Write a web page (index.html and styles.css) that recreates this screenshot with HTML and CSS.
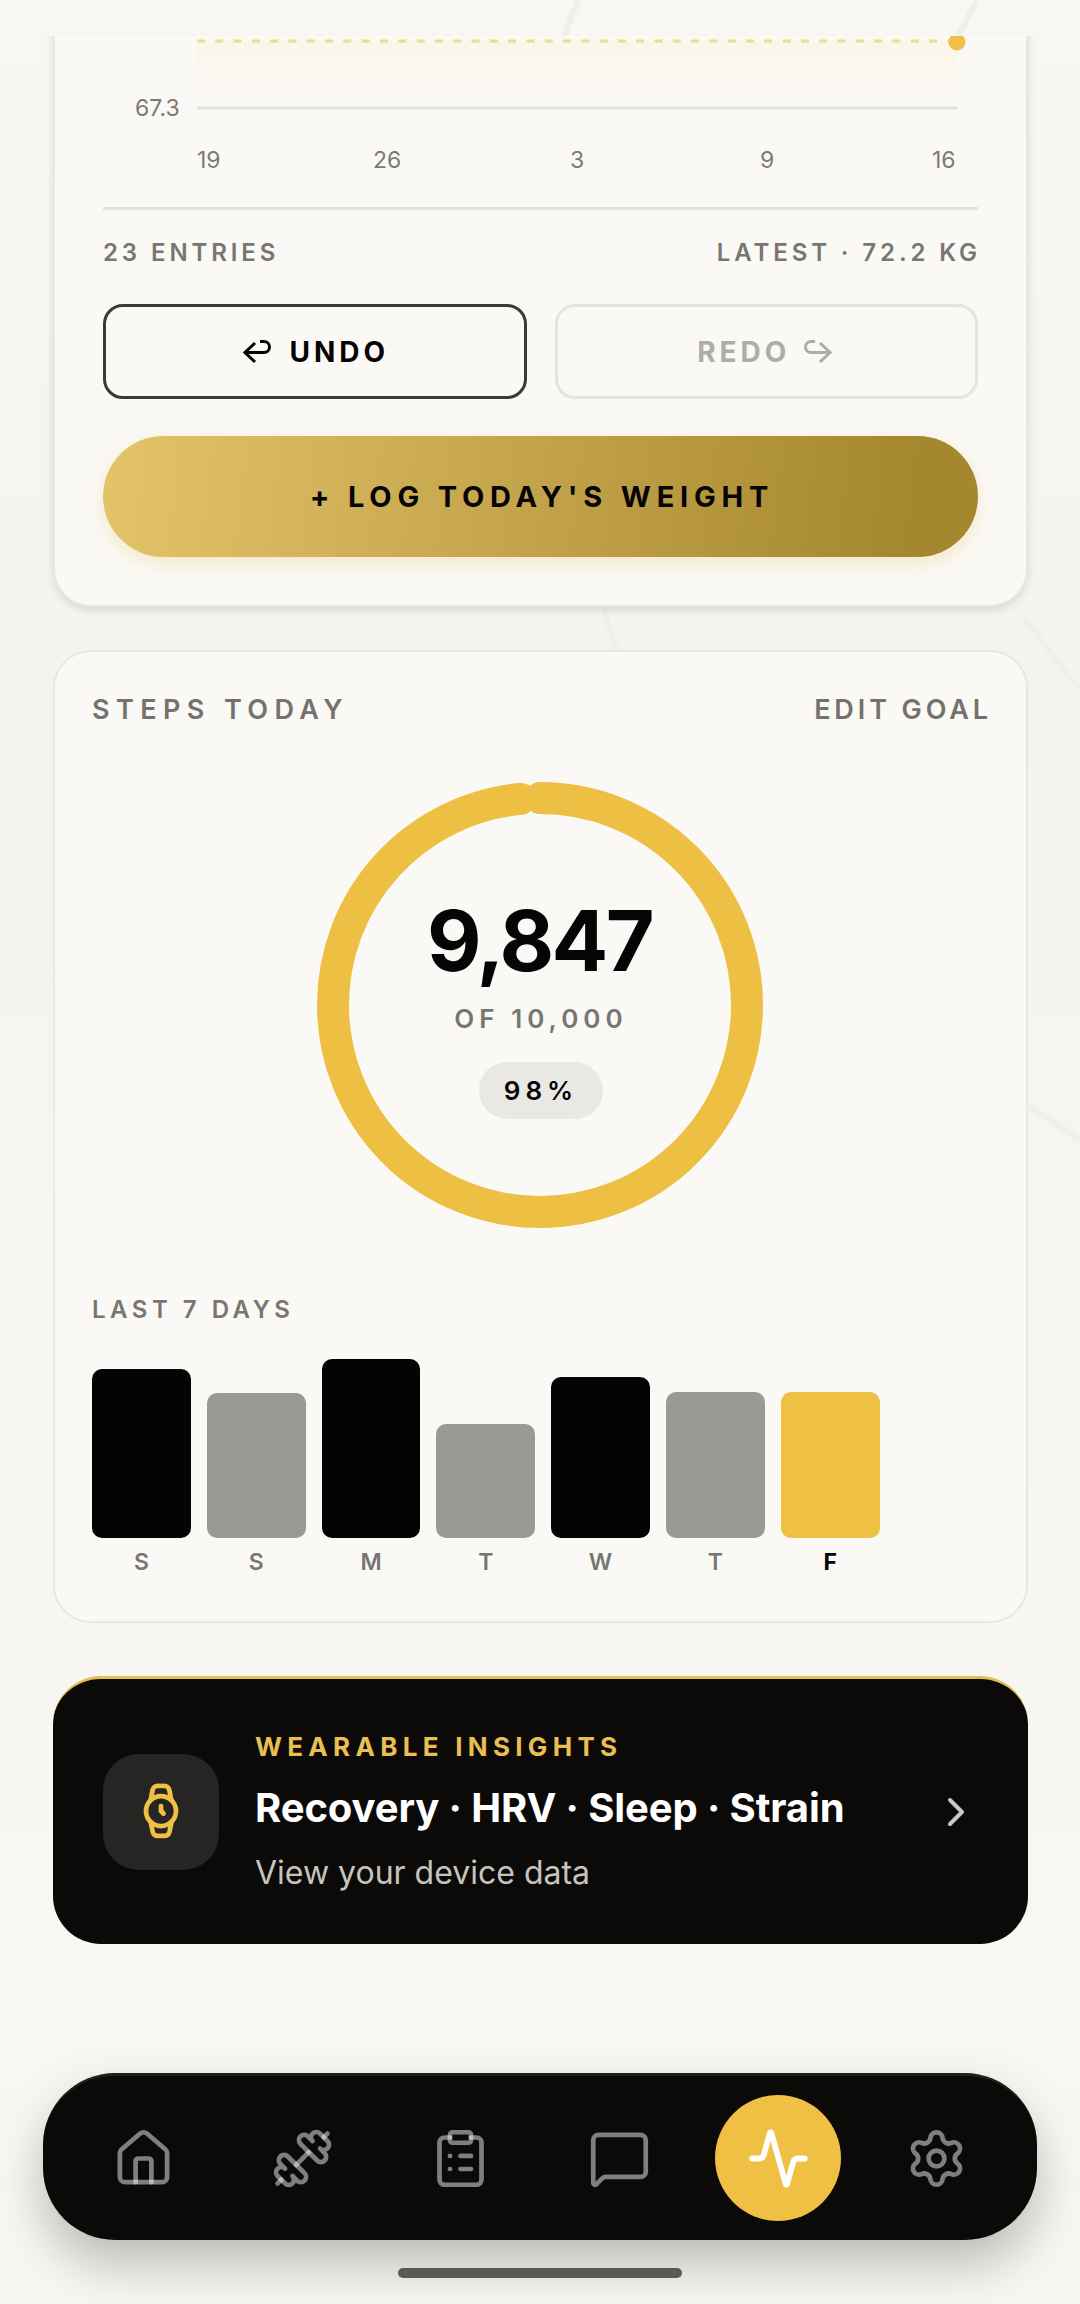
FILE: index.html
```html
<!DOCTYPE html>
<html lang="en">
<head>
<meta charset="utf-8">
<title>Progress</title>
<link rel="stylesheet" href="styles.css">
</head>
<body>
<div class="screen">
  <svg class="backdrop" viewBox="0 0 1080 2304" preserveAspectRatio="none" aria-hidden="true">
    <g fill="none" stroke="#f0efea" stroke-width="6">
      <path d="M578 0 Q570 20 565 36"/>
      <path d="M977 0 L958 36"/>
      <path d="M603 606 Q610 630 617 652"/>
      <path d="M1024 618 L1080 690"/>
      <path d="M1026 1105 Q1060 1125 1080 1140"/>
    </g>
  </svg>
  <main class="scroller">
    <section class="card weight-card">
      <div class="chart">
        <svg class="chart-svg" viewBox="0 0 1080 90" aria-hidden="true">
          <defs>
            <linearGradient id="area" x1="0" y1="0" x2="0" y2="1">
              <stop offset="0" stop-color="#f2c94c" stop-opacity=".07"/>
              <stop offset="1" stop-color="#f2c94c" stop-opacity="0"/>
            </linearGradient>
          </defs>
          <rect x="197" y="5" width="760" height="58" fill="url(#area)"/>
          <line x1="197" y1="5" x2="957" y2="5" stroke="#f1d98f" stroke-width="3" stroke-dasharray="8 10.300"/>
          <circle cx="957" cy="6" r="8.500" fill="#efc043"/>
          <line x1="197" y1="72" x2="957" y2="72" stroke="#e4e2dd" stroke-width="3"/>
        </svg>
        <span class="y-label">67.3</span>
        <span class="x-label x-19">19</span>
        <span class="x-label x-26">26</span>
        <span class="x-label x-3">3</span>
        <span class="x-label x-9">9</span>
        <span class="x-label x-16">16</span>
      </div>
      <div class="meta">
        <span>23 ENTRIES</span>
        <span class="meta-end">LATEST · 72.2 KG</span>
      </div>
      <div class="history">
        <button class="hist-btn hist-on">
          <svg class="hist-icon" viewBox="0 0 30 24" aria-hidden="true"><path d="M12 3 2 12.500 12 22"/><path d="M2 12.500h19a5.500 5.500 0 0 0 0-11h-4"/></svg>
          UNDO
        </button>
        <button class="hist-btn hist-off">
          REDO
          <svg class="hist-icon" viewBox="0 0 30 24" aria-hidden="true"><path d="m18 3 10 9.500L18 22"/><path d="M28 12.500H9a5.500 5.500 0 0 1 0-11h4"/></svg>
        </button>
      </div>
      <button class="log-btn">+ LOG TODAY'S WEIGHT</button>
    </section>

    <section class="card steps-card">
      <header class="steps-head">
        <span class="steps-title">STEPS TODAY</span>
        <span class="steps-edit">EDIT GOAL</span>
      </header>
      <div class="ring">
        <svg class="ring-svg" viewBox="0 0 446 446" aria-hidden="true">
          <circle cx="223" cy="223" r="207" fill="none" stroke="#edc043" stroke-width="32" stroke-linecap="round" stroke-dasharray="1280.700 1301" transform="rotate(-90 223 223)"/>
        </svg>
        <div class="ring-text">
          <div class="ring-value">9,847</div>
          <div class="ring-goal">OF 10,000</div>
          <div class="ring-pill">98%</div>
        </div>
      </div>
      <div class="week-title">LAST 7 DAYS</div>
      <div class="week">
        <div class="day"><div class="bar-slot"><div class="bar bar-dark" style="height:169px"></div></div><span class="day-label">S</span></div>
        <div class="day"><div class="bar-slot"><div class="bar bar-gray" style="height:145px"></div></div><span class="day-label">S</span></div>
        <div class="day"><div class="bar-slot"><div class="bar bar-dark" style="height:179px"></div></div><span class="day-label">M</span></div>
        <div class="day"><div class="bar-slot"><div class="bar bar-gray" style="height:114px"></div></div><span class="day-label">T</span></div>
        <div class="day"><div class="bar-slot"><div class="bar bar-dark" style="height:161px"></div></div><span class="day-label">W</span></div>
        <div class="day"><div class="bar-slot"><div class="bar bar-gray" style="height:146px"></div></div><span class="day-label">T</span></div>
        <div class="day"><div class="bar-slot"><div class="bar bar-gold" style="height:146px"></div></div><span class="day-label day-today">F</span></div>
      </div>
    </section>

    <section class="insights">
      <div class="insights-icon">
        <svg viewBox="0 0 24 24" class="i-watch" aria-hidden="true"><circle cx="12" cy="12" r="6"/><polyline points="12 10 12 12 13 13"/><path d="m16.130 7.660-.81-4.050a2 2 0 0 0-2-1.610h-2.680a2 2 0 0 0-2 1.610l-.78 4.050"/><path d="m7.880 16.360.8 4a2 2 0 0 0 2 1.610h2.720a2 2 0 0 0 2-1.610l.81-4.050"/></svg>
      </div>
      <div class="insights-text">
        <div class="insights-kicker">WEARABLE INSIGHTS</div>
        <div class="insights-title">Recovery · HRV · Sleep · Strain</div>
        <div class="insights-sub">View your device data</div>
      </div>
      <svg viewBox="0 0 24 24" class="i-chevron" aria-hidden="true"><path d="m9 18 6-6-6-6"/></svg>
    </section>
  </main>

  <nav class="nav">
    <div class="nav-item"><svg viewBox="0 0 24 24" class="nav-icon"><path d="M15 21v-8a1 1 0 0 0-1-1h-4a1 1 0 0 0-1 1v8"/><path d="M3 10a2 2 0 0 1 .709-1.528l7-5.999a2 2 0 0 1 2.582 0l7 5.999A2 2 0 0 1 21 10v9a2 2 0 0 1-2 2H5a2 2 0 0 1-2-2z"/></svg></div>
    <div class="nav-item"><svg viewBox="0 0 24 24" class="nav-icon"><path d="M17.596 12.768a2 2 0 1 0 2.829-2.829l-1.768-1.767a2 2 0 0 0 2.828-2.829l-2.828-2.828a2 2 0 0 0-2.829 2.828l-1.767-1.768a2 2 0 1 0-2.829 2.829z"/><path d="m2.500 21.500 1.400-1.400"/><path d="m20.100 3.900 1.400-1.400"/><path d="M5.343 21.485a2 2 0 1 0 2.829-2.828l1.767 1.768a2 2 0 1 0 2.829-2.829l-6.364-6.364a2 2 0 1 0-2.829 2.829l1.768 1.767a2 2 0 0 0-2.828 2.829z"/><path d="m9.600 14.400 4.800-4.800"/></svg></div>
    <div class="nav-item"><svg viewBox="0 0 24 24" class="nav-icon"><rect x="8" y="2" width="8" height="4" rx="1" ry="1"/><path d="M16 4h2a2 2 0 0 1 2 2v14a2 2 0 0 1-2 2H6a2 2 0 0 1-2-2V6a2 2 0 0 1 2-2h2"/><path d="M12 11h4"/><path d="M12 16h4"/><path d="M8 11h.01"/><path d="M8 16h.01"/></svg></div>
    <div class="nav-item"><svg viewBox="0 0 24 24" class="nav-icon"><path d="M22 17a2 2 0 0 1-2 2H6.828a2 2 0 0 0-1.414.586l-2.202 2.202A.71.71 0 0 1 2 21.286V5a2 2 0 0 1 2-2h16a2 2 0 0 1 2 2z"/></svg></div>
    <div class="nav-item"><div class="nav-active"><svg viewBox="0 0 24 24" class="nav-icon nav-icon-active"><path d="M22 12h-2.480a2 2 0 0 0-1.930 1.460l-2.350 8.360a.25.25 0 0 1-.48 0L9.240 2.180a.25.25 0 0 0-.48 0l-2.350 8.360A2 2 0 0 1 4.490 12H2"/></svg></div></div>
    <div class="nav-item"><svg viewBox="0 0 24 24" class="nav-icon"><path d="M9.671 4.136a2.340 2.340 0 0 1 4.659 0 2.340 2.340 0 0 0 3.319 1.915 2.340 2.340 0 0 1 2.330 4.033 2.340 2.340 0 0 0 0 3.831 2.340 2.340 0 0 1-2.330 4.033 2.340 2.340 0 0 0-3.319 1.915 2.340 2.340 0 0 1-4.659 0 2.340 2.340 0 0 0-3.320-1.915 2.340 2.340 0 0 1-2.330-4.033 2.340 2.340 0 0 0 0-3.831A2.340 2.340 0 0 1 6.350 6.051a2.340 2.340 0 0 0 3.319-1.915"/><circle cx="12" cy="12" r="3"/></svg></div>
  </nav>
  <div class="home-bar"></div>
</div>
</body>
</html>
```

FILE: styles.css
```css
* { box-sizing: border-box; }
html, body { margin: 0; padding: 0; }
body { width: 1080px; height: 2304px; overflow: hidden; background: #f6f5f1; font-family: Inter, "Liberation Sans", sans-serif; }

.screen { position: relative; width: 1080px; height: 2304px; padding-top: 36px; overflow: hidden; background: linear-gradient(180deg, #f8f7f3 0%, #f4f3ef 30%, #f6f5f1 55%, #f8f7f3 85%, #f7f6f2 100%); }
.backdrop { position: absolute; inset: 0; width: 1080px; height: 2304px; }
.scroller { position: relative; height: 2268px; overflow: hidden; padding: 0 52px 0 53px; display: flex; flex-direction: column; gap: 43px; }

.card { background: #fbf9f5; border: 2px solid #e9e7e2; border-radius: 38px; }

.weight-card { flex: none; margin-top: -60px; height: 631px; padding: 0 48px; border-top: 0; border-radius: 0 0 38px 38px; box-shadow: 0 3px 8px rgba(0,0,0,.12); display: flex; flex-direction: column; }
.chart { position: relative; flex: none; width: 1080px; height: 231px; margin-left: -103px; }
.chart-svg { position: absolute; left: 0; top: 60px; width: 1080px; height: 90px; }
.y-label, .x-label { position: absolute; font-size: 23px; line-height: 28px; color: #7b7a75; white-space: nowrap; }
.y-label { left: 135px; top: 118px; }
.x-label { top: 170px; }
.x-19 { left: 197px; }
.x-26 { left: 373px; }
.x-3 { left: 570px; }
.x-9 { left: 760px; }
.x-16 { left: 932px; }

.meta { flex: none; display: flex; justify-content: space-between; align-items: center; height: 90px; border-top: 3px solid #e4e2dd; font-size: 24px; font-weight: 600; letter-spacing: 3.900px; color: #777672; padding-bottom: 2px; }
.meta-end { margin-right: -3px; }
.history { flex: none; display: flex; gap: 28px; height: 95px; margin-top: 7px; }
.hist-btn { flex: 1; display: flex; align-items: center; justify-content: center; background: transparent; border-radius: 20px; font-family: inherit; font-size: 28px; font-weight: 700; letter-spacing: 4px; padding: 0; }
.hist-on { gap: 16px; padding-left: 3px; border: 3px solid #3b3a37; color: #050505; }
.hist-off { gap: 12px; padding-right: 3px; border: 3px solid #e6e4df; color: #aeadaa; }
.hist-icon { width: 30px; height: 24px; fill: none; stroke: currentColor; stroke-width: 3; stroke-linecap: butt; stroke-linejoin: miter; }
.log-btn { flex: none; display: block; width: 100%; height: 121px; margin-top: 37px; border: 0; border-radius: 61px; padding: 0 0 0 3px; background: linear-gradient(97deg, #e4c469 0%, #a5872f 92%); box-shadow: 0 6px 18px rgba(226,190,90,.28); font-family: inherit; font-size: 29px; font-weight: 700; letter-spacing: 5.800px; color: #050505; }

.steps-card { flex: none; height: 973px; padding: 42px 34px 0 37px; }
.steps-head { display: flex; justify-content: space-between; align-items: center; height: 30px; }
.steps-title { font-size: 27px; font-weight: 600; letter-spacing: 6.400px; color: #73726e; }
.steps-edit { font-size: 27px; font-weight: 600; letter-spacing: 3.900px; color: #73726e; }
.ring { position: relative; width: 446px; height: 446px; margin: 58px auto 0; left: -2px; display: flex; align-items: flex-start; justify-content: center; }
.ring-svg { position: absolute; inset: 0; width: 446px; height: 446px; }
.ring-text { position: relative; display: flex; flex-direction: column; align-items: center; padding: 117px 0 0 2px; }
.ring-value { margin-left: -3px; font-size: 84px; line-height: 84px; font-weight: 700; letter-spacing: -2.600px; color: #050505; }
.ring-goal { margin-top: 20px; font-size: 26px; line-height: 32px; font-weight: 600; letter-spacing: 5px; color: #777672; }
.ring-pill { margin-top: 27px; width: 124px; height: 57px; border-radius: 29px; background: #e9e8e5; display: flex; align-items: center; justify-content: center; font-size: 26px; font-weight: 600; letter-spacing: 5px; color: #050505; }
.week-title { margin-top: 67px; font-size: 24px; line-height: 30px; font-weight: 600; letter-spacing: 4.500px; color: #777672; }
.week { display: flex; gap: 16px; margin-top: 34px; }
.day { width: 98.800px; display: flex; flex-direction: column; align-items: center; }
.bar-slot { width: 100%; height: 179px; display: flex; align-items: flex-end; }
.bar { width: 100%; border-radius: 10px; }
.bar-dark { background: #040404; }
.bar-gray { background: #9a9995; }
.bar-gold { background: #eec144; }
.day-label { margin-top: 10px; font-size: 23px; line-height: 28px; font-weight: 600; color: #777672; }
.day-today { color: #050505; font-weight: 700; }

.insights { flex: none; height: 268px; margin-top: 10px; display: flex; align-items: center; padding: 0 48px 0 50px; border-top: 3px solid #e6bd55; border-radius: 48px; background: #0b0a08; }
.insights-icon { flex: none; width: 116px; height: 116px; border-radius: 36px; background: #262523; display: flex; align-items: center; justify-content: center; }
.i-watch { width: 60px; height: 60px; margin-top: -2px; fill: none; stroke: #efc043; stroke-width: 1.900; stroke-linecap: round; stroke-linejoin: round; }
.insights-text { flex: 1; margin-left: 36px; }
.insights-kicker { font-size: 26px; line-height: 32px; font-weight: 700; letter-spacing: 5.300px; color: #e9be52; }
.insights-title { margin-top: 20px; font-size: 40px; line-height: 50px; font-weight: 700; letter-spacing: -.1px; color: #fff; }
.insights-sub { margin-top: 21px; font-size: 32px; line-height: 38px; color: #c6c4bf; }
.i-chevron { flex: none; width: 48px; height: 48px; margin-left: -2px; fill: none; stroke: #c9c8c4; stroke-width: 2; stroke-linecap: round; stroke-linejoin: round; }

.nav { position: absolute; left: 43px; top: 2073px; width: 994px; height: 167px; padding: 0 21px; display: flex; background: #0b0a08; border-top: 3px solid #211f1b; border-radius: 72px; box-shadow: 0 24px 48px rgba(20,20,10,.26); }
.nav-item { flex: 1; display: flex; align-items: center; justify-content: center; }
.nav-icon { width: 63px; height: 63px; fill: none; stroke: rgba(255,255,255,.48); stroke-width: 1.800; stroke-linecap: round; stroke-linejoin: round; }
.nav-active { width: 126px; height: 126px; border-radius: 50%; background: #efc043; display: flex; align-items: center; justify-content: center; }
.nav-icon-active { stroke: #fff; stroke-width: 2.200; }
.home-bar { position: absolute; left: 398px; top: 2268px; width: 284px; height: 10px; border-radius: 5px; background: #5a5955; }
```
